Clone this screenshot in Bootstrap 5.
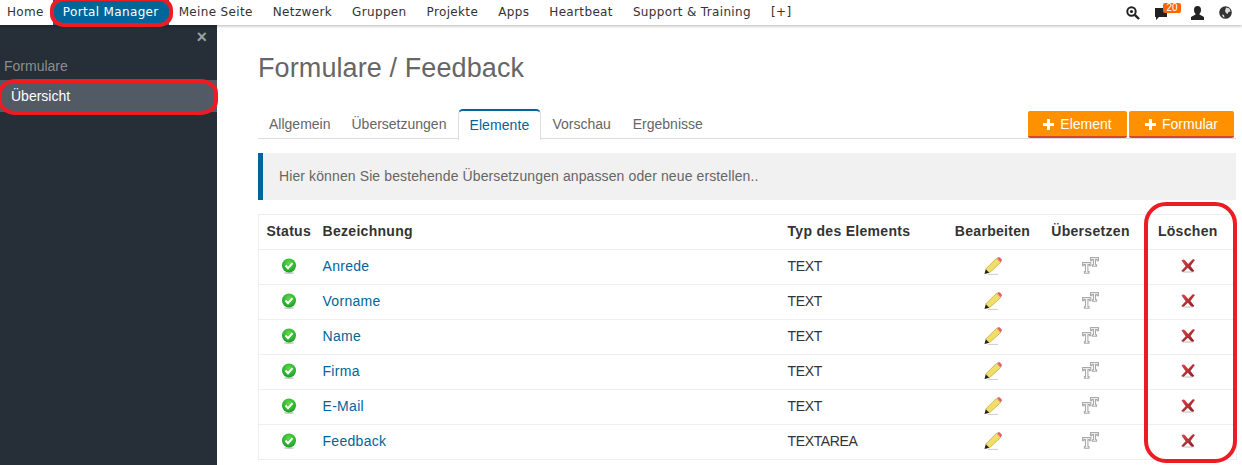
<!DOCTYPE html>
<html lang="de"><head><meta charset="utf-8"><title>Formulare</title>
<link rel="stylesheet" href="https://cdn.jsdelivr.net/npm/bootstrap@5.3.0/dist/css/bootstrap.min.css">
<style>
html,body{height:465px;overflow:hidden}
body{font-family:"Liberation Sans",Arial,sans-serif;font-size:14px;color:#333;position:relative;background:#fff}
.topbar{height:25px;background:#fff;box-shadow:0 1px 3px rgba(0,0,0,.3);position:relative;z-index:2;font-family:"DejaVu Sans",sans-serif;font-size:12px;letter-spacing:.35px;padding-left:0}
.topbar .nav-link{color:#333;padding:0 10px;line-height:25px;height:25px}
.topbar .nav-link.first{padding:0 9px 0 7px}
.topbar .nav-link.active{background:#006699;color:#fff}
.topicons{padding-right:10px}
.ic-b{margin-left:15px}.ic-c{margin-left:12px}.ic-d{margin-left:15px}
.bubble{position:relative;width:12px;height:14px;display:block;margin-right:12px;top:1px}
.bubble svg{display:block}
.cnt{position:absolute;left:8px;top:-4px;background:#f60;color:#fff;font-size:10px;line-height:10px;height:10px;width:18px;border-radius:2px;text-align:center;letter-spacing:0;font-family:"Liberation Sans",sans-serif}
.shell{height:440px}
.sidebar{width:217px;flex:none;background:#262e37;color:#fff;position:relative}
.closer{position:absolute;right:10px;top:3px;color:#9a9ea3;font-size:18px;line-height:18px;font-weight:700}
.sbtitle{color:#8d8d8d;font-size:14px;padding:33px 0 0 4px;line-height:16px}
.sbitem{margin-top:6px;background:#525a65;color:#fff;padding:0 0 0 11px;line-height:32px;height:32px;display:block;text-decoration:none;font-size:14px}
.content{flex:1;min-width:0;padding:26px 6px 0 41px}
.pagehead{font-size:27px;line-height:34px;color:#666;font-weight:400;margin:0;letter-spacing:.1px}
.tabrow{margin-top:24px;height:30px;border-bottom:1px solid #ddd;position:relative}
.nav-tabs.tabset{border:0;font-size:14px}
.tabset .nav-link{color:#666;border:0;padding:0 11px;line-height:30px;height:30px;border-radius:0;margin:0}
.tabset .nav-link.tight{padding-left:10px}
.tabset .nav-link.active{color:#006699;border:1px solid #ddd;border-top:2px solid #006699;border-bottom:0;background:#fff;height:31px;line-height:29px;border-radius:5px 5px 0 0;padding:0 11px 0 10px;margin-left:1px;letter-spacing:.1px}
.acts{position:absolute;right:2px;top:2px;gap:2px}
.btn-or{background:#ff9000;color:#fff;border:0;border-bottom:2px solid #d9472b;border-radius:2px;height:27px;padding:1px 0 0;font-size:14px;display:flex;align-items:center;justify-content:center;gap:6px}
.btn-or:hover{background:#ff9000;color:#fff}
.w1{width:99px}.w2{width:105px}
.infobox{margin:14px 0;height:47px;background:#f1f1f1;border-left:5px solid #006699;color:#666;padding:0 0 0 16px;line-height:47px;font-size:14px;letter-spacing:.11px}
.tbl{border:1px solid #eee;table-layout:fixed;width:978px;margin:0;color:#333;--bs-table-striped-bg:#f6f6f6;--bs-table-striped-color:#333;--bs-table-color:#333}
.tbl th,.tbl td{height:35px;padding:0 0 2px;vertical-align:middle;border-bottom:1px solid #eee;box-shadow:none}
.tbl th{font-size:14px;letter-spacing:.3px;font-weight:700;text-align:center}
.tbl .lft{text-align:left}
.tbl a{color:#006699;text-decoration:none;letter-spacing:.3px}
.tbl .kind{letter-spacing:-.35px}
.tbl svg{display:inline-block;vertical-align:middle;margin-bottom:2px}
.mark1{position:absolute;border:4px solid #ed1c24;pointer-events:none;z-index:5}
.m-a{left:50px;top:-3px;width:123px;height:30px;border-radius:14px/13px}
.m-b{left:-2px;top:79px;width:220px;height:36px;border-radius:18px/14px}
.m-c{left:1144px;top:202px;width:93px;height:261px;border-radius:22px}
</style></head>
<body>
<nav class="topbar d-flex justify-content-between align-items-center">
<ul class="nav flex-nowrap">
<li class="nav-item"><a class="nav-link first" href="#">Home</a></li>
<li class="nav-item"><a class="nav-link active" href="#">Portal Manager</a></li>
<li class="nav-item"><a class="nav-link" href="#">Meine Seite</a></li>
<li class="nav-item"><a class="nav-link" href="#">Netzwerk</a></li>
<li class="nav-item"><a class="nav-link" href="#">Gruppen</a></li>
<li class="nav-item"><a class="nav-link" href="#">Projekte</a></li>
<li class="nav-item"><a class="nav-link" href="#">Apps</a></li>
<li class="nav-item"><a class="nav-link" href="#">Heartbeat</a></li>
<li class="nav-item"><a class="nav-link" href="#">Support &amp; Training</a></li>
<li class="nav-item"><a class="nav-link" href="#">[+]</a></li>
</ul>
<div class="d-flex align-items-center topicons">
<svg width="14" height="14" viewBox="0 0 14 14"><circle cx="5.500" cy="5.500" r="4.200" fill="none" stroke="#222" stroke-width="2"/><circle cx="5.500" cy="5.500" r="1.600" fill="#222"/><path d="M8.800 8.800L13 13" stroke="#222" stroke-width="2.400"/></svg>
<span class="bubble ic-b"><svg width="12" height="14" viewBox="0 0 12 14"><path d="M0 1h12v9H4l-3 3v-3H0z" fill="#222"/></svg><span class="cnt">20</span></span>
<svg class="ic-c" width="13" height="14" viewBox="0 0 13 14"><ellipse cx="6.500" cy="4" rx="3.500" ry="4" fill="#222"/><path d="M4.500 7h4v1.500l4.500 2.500v3H0v-3l4.500-2.500z" fill="#222"/></svg>
<svg class="ic-d" width="13" height="13" viewBox="0 0 13 13"><circle cx="6.500" cy="6.500" r="6.300" fill="#333"/><path d="M7 1.500l3.500 1 1 3-2 .5-1 2-1.500-1-1-2zM3 8.500l2 .5.500 2.500-1.500-.5z" fill="#ddd"/></svg>
</div>
</nav>
<div class="d-flex shell">
<aside class="sidebar">
<span class="closer">&times;</span>
<div class="sbtitle">Formulare</div>
<a class="sbitem" href="#">Übersicht</a>
</aside>
<main class="content">
<h1 class="pagehead">Formulare / Feedback</h1>
<div class="tabrow">
<ul class="nav nav-tabs tabset">
<li class="nav-item"><a class="nav-link" href="#">Allgemein</a></li>
<li class="nav-item"><a class="nav-link tight" href="#">Übersetzungen</a></li>
<li class="nav-item"><a class="nav-link active" href="#">Elemente</a></li>
<li class="nav-item"><a class="nav-link" href="#">Vorschau</a></li>
<li class="nav-item"><a class="nav-link" href="#">Ergebnisse</a></li>
</ul>
<div class="d-flex acts">
<button class="btn btn-or w1" type="button"><svg width="11" height="11" viewBox="0 0 11 11"><path d="M4 0h3v4h4v3H7v4H4V7H0V4h4z" fill="#fff"/></svg>Element</button>
<button class="btn btn-or w2" type="button"><svg width="11" height="11" viewBox="0 0 11 11"><path d="M4 0h3v4h4v3H7v4H4V7H0V4h4z" fill="#fff"/></svg>Formular</button>
</div>
</div>
<div class="infobox">Hier können Sie bestehende Übersetzungen anpassen oder neue erstellen..</div>
<svg width="0" height="0" class="position-absolute"><defs>
<radialGradient id="gc" cx=".5" cy=".35" r=".7"><stop offset="0" stop-color="#5fdc4a"/><stop offset="1" stop-color="#129a22"/></radialGradient>
<linearGradient id="gx" x1="0" y1="0" x2="1" y2="1"><stop offset="0" stop-color="#d8494e"/><stop offset="1" stop-color="#8e1a1e"/></linearGradient>
<symbol id="ok" viewBox="0 0 16 16"><ellipse cx="8" cy="15" rx="5" ry="1" fill="#ccc"/><circle cx="8" cy="7.500" r="7" fill="url(#gc)"/><path d="M4.500 7.500l2.500 2.700 4.500-5" fill="none" stroke="#fff" stroke-width="2"/></symbol>
<symbol id="pen" viewBox="0 0 18 18"><path d="M.5 17l1.300-5 3.700 3.700z" fill="#222"/><path d="M1.800 12L12.500 1.300l4.200 4.200L5.500 15.700z" fill="#f1dd6a" stroke="#c9ad3c" stroke-width=".8"/><path d="M13 1l.8-.6c.7-.4 1.500-.3 2 .2l1.700 1.700c.5.600.5 1.400 0 2l-1 1z" fill="#e0606a"/><path d="M4 17.400h10" stroke="#ccc"/></symbol>
<symbol id="tt" viewBox="0 0 17 17"><g fill="#fff" stroke="#aaa" stroke-width="1.100"><path d="M8.500.6h8v3.200h-1.300V2.600h-1.700v5.200h1.100v1.500h-4.200V7.800h1.100V2.600H9.800v1.200H8.500z"/><path d="M.6 5.600h8.200v3.200H7.500V7.600H5.900v7h1.100v1.700H2.400v-1.700h1.100v-7H1.900v1.200H.6z"/></g></symbol>
<symbol id="del" viewBox="0 0 14 14"><ellipse cx="7" cy="13" rx="6" ry="1" fill="#ddd"/><path d="M.5 1.500C1.800.4 3 .3 4 1.200L7.200 5 11.500.6c.8-.4 1.600-.3 2.400.4L9.500 7l3.800 5c-1 .8-2.200.8-3.200.2L6.800 8.800 3 12.600c-1 .4-2 .2-2.800-.5L4.600 7.200z" fill="url(#gx)"/></symbol>
</defs></svg>
<table class="table table-striped tbl">
<colgroup><col style="width:60px"><col style="width:465px"><col style="width:160px"><col style="width:98px"><col style="width:98px"><col style="width:97px"></colgroup>
<thead><tr><th>Status</th><th class="lft ps-1">Bezeichnung</th><th class="lft ps-1">Typ des Elements</th><th>Bearbeiten</th><th>Übersetzen</th><th>Löschen</th></tr></thead>
<tbody>
<tr><td class="text-center"><svg width="16" height="16"><use href="#ok"/></svg></td><td class="ps-1"><a href="#">Anrede</a></td><td class="ps-1 kind">TEXT</td><td class="text-center"><svg width="18" height="18"><use href="#pen"/></svg></td><td class="text-center"><svg width="17" height="17"><use href="#tt"/></svg></td><td class="text-center"><svg width="14" height="14"><use href="#del"/></svg></td></tr>
<tr><td class="text-center"><svg width="16" height="16"><use href="#ok"/></svg></td><td class="ps-1"><a href="#">Vorname</a></td><td class="ps-1 kind">TEXT</td><td class="text-center"><svg width="18" height="18"><use href="#pen"/></svg></td><td class="text-center"><svg width="17" height="17"><use href="#tt"/></svg></td><td class="text-center"><svg width="14" height="14"><use href="#del"/></svg></td></tr>
<tr><td class="text-center"><svg width="16" height="16"><use href="#ok"/></svg></td><td class="ps-1"><a href="#">Name</a></td><td class="ps-1 kind">TEXT</td><td class="text-center"><svg width="18" height="18"><use href="#pen"/></svg></td><td class="text-center"><svg width="17" height="17"><use href="#tt"/></svg></td><td class="text-center"><svg width="14" height="14"><use href="#del"/></svg></td></tr>
<tr><td class="text-center"><svg width="16" height="16"><use href="#ok"/></svg></td><td class="ps-1"><a href="#">Firma</a></td><td class="ps-1 kind">TEXT</td><td class="text-center"><svg width="18" height="18"><use href="#pen"/></svg></td><td class="text-center"><svg width="17" height="17"><use href="#tt"/></svg></td><td class="text-center"><svg width="14" height="14"><use href="#del"/></svg></td></tr>
<tr><td class="text-center"><svg width="16" height="16"><use href="#ok"/></svg></td><td class="ps-1"><a href="#">E-Mail</a></td><td class="ps-1 kind">TEXT</td><td class="text-center"><svg width="18" height="18"><use href="#pen"/></svg></td><td class="text-center"><svg width="17" height="17"><use href="#tt"/></svg></td><td class="text-center"><svg width="14" height="14"><use href="#del"/></svg></td></tr>
<tr><td class="text-center"><svg width="16" height="16"><use href="#ok"/></svg></td><td class="ps-1"><a href="#">Feedback</a></td><td class="ps-1 kind">TEXTAREA</td><td class="text-center"><svg width="18" height="18"><use href="#pen"/></svg></td><td class="text-center"><svg width="17" height="17"><use href="#tt"/></svg></td><td class="text-center"><svg width="14" height="14"><use href="#del"/></svg></td></tr>
</tbody></table>
</main>
</div>
<div class="mark1 m-a"></div><div class="mark1 m-b"></div><div class="mark1 m-c"></div>
<script src="https://cdn.jsdelivr.net/npm/bootstrap@5.3.0/dist/js/bootstrap.bundle.min.js"></script>
</body></html>
